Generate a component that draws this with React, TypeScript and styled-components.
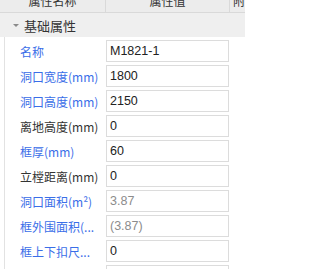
import React from 'react'
import styled, { createGlobalStyle } from 'styled-components'

const GlobalStyle = createGlobalStyle`
  html, body {
    margin: 0;
    padding: 0;
    background: #ffffff;
    overflow: hidden;
  }
  body {
    font-family: "Noto Sans CJK SC", "Liberation Sans", sans-serif;
  }
`

const Panel = styled.div`
  width: 245px;
  height: 269px;
  overflow: hidden;
  background: #ffffff;
`

const HeaderRow = styled.div`
  display: flex;
  height: 24px;
  margin-top: -12px;
  background: #ececec;
  border-bottom: 1px solid #d9d9d9;
`

const HeaderCell = styled.div<{ $w: number }>`
  width: ${({ $w }) => $w}px;
  flex: none;
  display: flex;
  align-items: center;
  justify-content: center;
  font-size: 12px;
  color: #333;
  border-right: 1px solid #d9d9d9;
  white-space: nowrap;
  overflow: hidden;
`

const LastHeaderCell = styled(HeaderCell)`
  justify-content: flex-start;
  padding-left: 3px;
  border-right: none;
`

const GroupRow = styled.div`
  display: flex;
  align-items: center;
  height: 24px;
  background: #efefef;
  padding-left: 13px;
  gap: 5px;
  font-size: 13px;
  color: #333;
`

const Caret = styled.span`
  width: 0;
  height: 0;
  border-left: 3px solid transparent;
  border-right: 3px solid transparent;
  border-top: 3px solid #8a8a8a;
  margin-top: 1px;
`

const Body = styled.div`
  margin-left: 4px;
  border-left: 1px solid #e2e2e2;
`

const Row = styled.div`
  display: flex;
  align-items: flex-end;
  height: 25px;
`

const Label = styled.div<{ $blue?: boolean }>`
  width: 86px;
  flex: none;
  padding-left: 15px;
  height: 22px;
  display: flex;
  align-items: center;
  font-size: 12px;
  color: ${({ $blue }) => ($blue ? '#3a6ee8' : '#333')};
  white-space: nowrap;
  overflow: hidden;
`

const Value = styled.div<{ $muted?: boolean }>`
  width: 123px;
  height: 22px;
  box-sizing: border-box;
  flex: none;
  border: 1px solid #dcdcdc;
  padding-left: 3px;
  display: flex;
  align-items: center;
  font-family: "Liberation Sans", "Noto Sans CJK SC", sans-serif;
  font-size: 12.5px;
  color: ${({ $muted }) => ($muted ? '#8c8c8c' : '#222')};
  background: #fff;
`

type Prop = { label: string; value: string; blue?: boolean; muted?: boolean }

const props: Prop[] = [
  { label: '名称', value: 'M1821-1', blue: true },
  { label: '洞口宽度(mm)', value: '1800', blue: true },
  { label: '洞口高度(mm)', value: '2150', blue: true },
  { label: '离地高度(mm)', value: '0' },
  { label: '框厚(mm)', value: '60', blue: true },
  { label: '立樘距离(mm)', value: '0' },
  { label: '洞口面积(m²)', value: '3.87', blue: true, muted: true },
  { label: '框外围面积(...', value: '(3.87)', blue: true, muted: true },
  { label: '框上下扣尺...', value: '0', blue: true },
  { label: '', value: '' },
]

export default function App() {
  return (
    <Panel>
      <GlobalStyle />
      <HeaderRow>
        <HeaderCell $w={105}>属性名称</HeaderCell>
        <HeaderCell $w={123}>属性值</HeaderCell>
        <LastHeaderCell $w={16}>附加</LastHeaderCell>
      </HeaderRow>
      <GroupRow>
        <Caret />
        基础属性
      </GroupRow>
      <Body>
        {props.map((p, i) => (
          <Row key={i}>
            <Label $blue={p.blue}>{p.label}</Label>
            <Value $muted={p.muted}>{p.value}</Value>
          </Row>
        ))}
      </Body>
    </Panel>
  )
}
